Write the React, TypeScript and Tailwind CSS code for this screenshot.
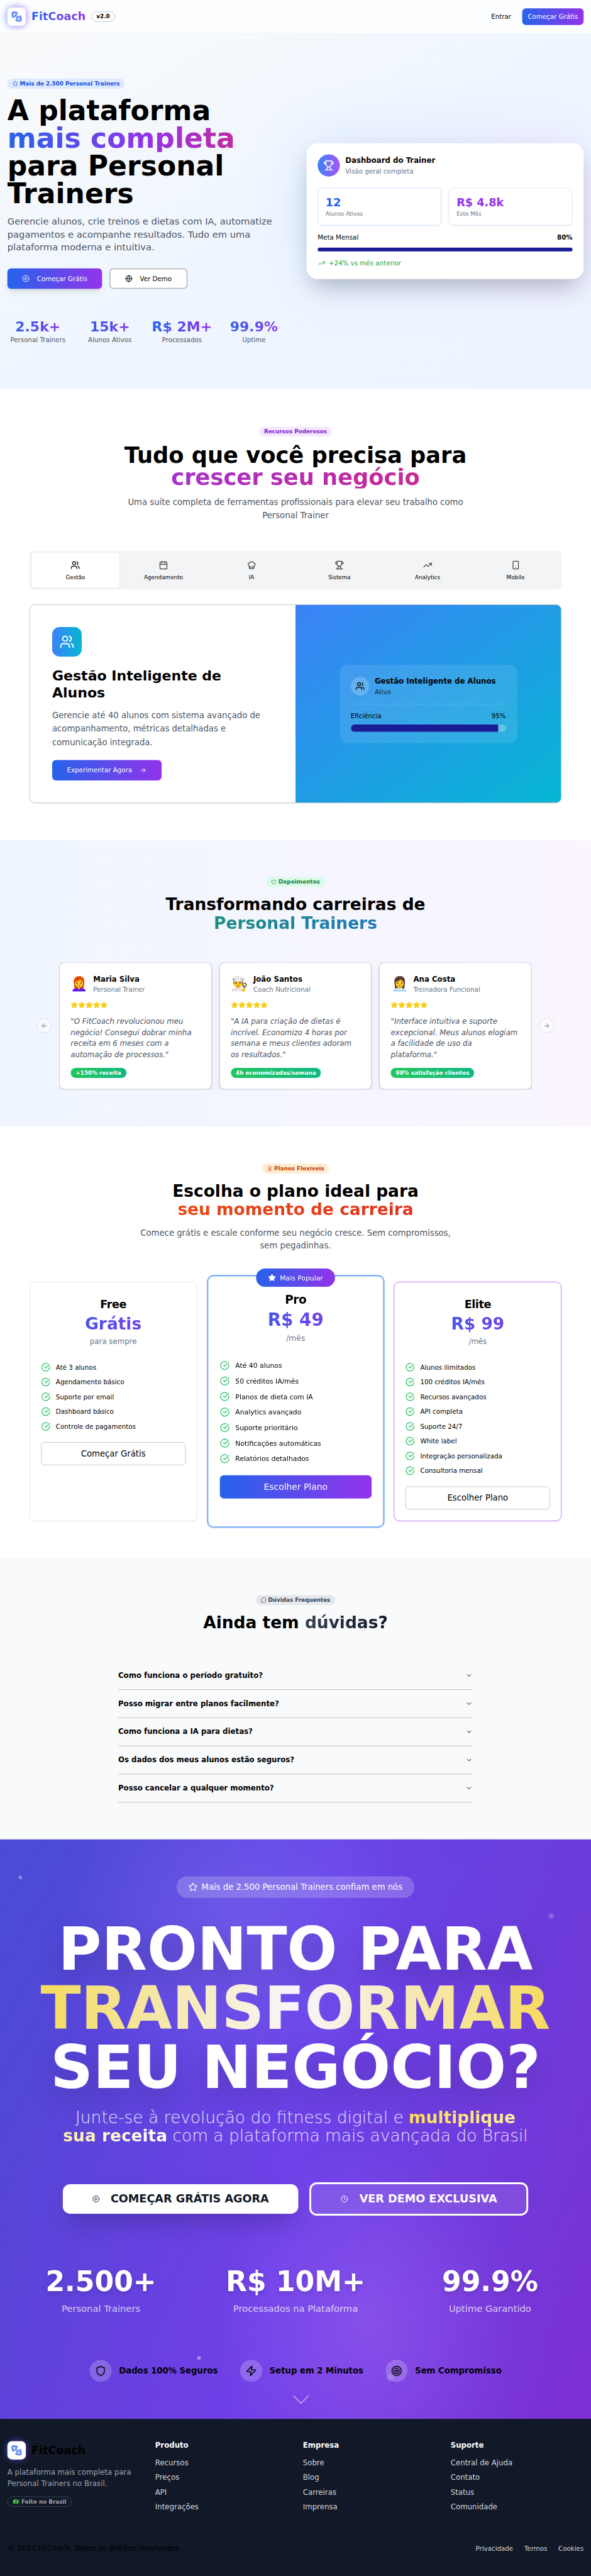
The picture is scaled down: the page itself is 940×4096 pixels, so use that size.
import React from "react";
import {
  ArrowLeft,
  ArrowRight,
  Award,
  Calendar,
  ChefHat,
  ChevronDown,
  CircleCheckBig,
  CirclePlay,
  Clock,
  Globe,
  Heart,
  MessageCircle,
  Shield,
  Smartphone,
  Star,
  Target,
  TrendingUp,
  Trophy,
  Users,
  Zap,
} from "lucide-react";

function Dumbbell({ className }: { className?: string }) {
  return (
    <svg
      className={className}
      viewBox="0 0 24 24"
      fill="none"
      stroke="currentColor"
      strokeWidth="2"
      strokeLinecap="round"
      strokeLinejoin="round"
    >
      <path d="M14.4 14.4 9.6 9.6" />
      <path d="M18.657 21.485a2 2 0 1 1-2.829-2.828l-1.767 1.768a2 2 0 1 1-2.829-2.829l6.364-6.364a2 2 0 1 1 2.829 2.829l-1.768 1.767a2 2 0 1 1 2.828 2.829z" />
      <path d="m21.5 21.5-1.4-1.4" />
      <path d="M3.9 3.9 2.5 2.5" />
      <path d="M6.404 12.768a2 2 0 1 1-2.829-2.829l1.768-1.767a2 2 0 1 1-2.828-2.829l2.828-2.828a2 2 0 1 1 2.829 2.828l1.767-1.768a2 2 0 1 1 2.829 2.829z" />
    </svg>
  );
}

function LogoMark() {
  return (
    <div className="relative size-10 shrink-0">
      <div className="absolute inset-0 rounded-xl bg-linear-to-r/srgb from-[#2563eb] to-[#9333ea] opacity-75 blur-sm" />
      <div className="relative flex size-10 items-center justify-center rounded-[10px] bg-white">
        <Dumbbell className="size-6 text-[#2563eb]" />
      </div>
    </div>
  );
}

function Badge({ className = "", children }: { className?: string; children: React.ReactNode }) {
  return (
    <span
      className={`inline-flex h-[22px] shrink-0 items-center gap-1 rounded-full border px-2.5 text-xs font-semibold whitespace-nowrap ${className}`}
    >
      {children}
    </span>
  );
}

function Header() {
  return (
    <header className="flex h-[73px] items-center justify-between border-b border-[#e5e7eb] bg-[#fdfeff] px-4">
      <div className="flex items-center gap-3">
        <LogoMark />
        <span className="bg-linear-to-r/srgb from-[#2563eb] to-[#9333ea] bg-clip-text text-2xl font-bold text-transparent">
          FitCoach
        </span>
        <Badge className="border-[#b3b3b3]">v2.0</Badge>
      </div>
      <div className="flex items-center gap-6 text-sm">
        <span>Entrar</span>
        <button className="h-9 rounded-lg bg-linear-to-r/srgb from-[#2563eb] to-[#9333ea] px-3 text-white">
          Começar Grátis
        </button>
      </div>
    </header>
  );
}

const heroStats = [
  ["2.5k+", "Personal Trainers"],
  ["15k+", "Alunos Ativos"],
  ["R$ 2M+", "Processados"],
  ["99.9%", "Uptime"],
];

function Hero() {
  return (
    <section className="grid h-[769px] grid-cols-2 gap-12 overflow-hidden bg-linear-to-br/srgb from-[#f9fafb] via-[#eff6ff] to-[#eef4ff] px-4 pt-24">
      <div>
        <div className="mb-4 flex h-6 pt-px">
          <Badge className="border-transparent bg-[#dbeafe] text-[#1d4ed8]">
            <Star className="size-3" />
            Mais de 2.500 Personal Trainers
          </Badge>
        </div>
        <h1 className="text-6xl leading-none font-bold whitespace-nowrap">
          A plataforma
          <span className="block bg-linear-to-r/srgb from-[#2563eb] via-[#9333ea] to-[#db2777] bg-clip-text text-transparent">
            mais completa
          </span>
          para Personal
          <br />
          Trainers
        </h1>
        <p className="mt-4 text-xl text-[#4b5563]">
          Gerencie alunos, crie treinos e dietas com IA, automatize pagamentos e acompanhe resultados. Tudo em uma
          plataforma moderna e intuitiva.
        </p>
        <div className="mt-8 flex gap-4 text-sm">
          <button className="flex h-11 items-center gap-4 rounded-lg bg-linear-to-r/srgb from-[#2563eb] to-[#9333ea] px-8 text-white shadow-lg">
            <CirclePlay className="size-4" />
            Começar Grátis
          </button>
          <button className="flex h-11 items-center gap-4 rounded-lg border-2 border-[#b3b3b3] bg-white px-8">
            <Globe className="size-4" />
            Ver Demo
          </button>
        </div>
        <div className="mt-16 grid grid-cols-4 gap-6 text-center">
          {heroStats.map(([value, label]) => (
            <div key={label}>
              <div className="bg-linear-to-r/srgb from-[#2563eb] to-[#9333ea] bg-clip-text text-3xl font-bold whitespace-nowrap text-transparent">
                {value}
              </div>
              <div className="text-sm text-[#4b5563]">{label}</div>
            </div>
          ))}
        </div>
      </div>

      <div className="relative mt-[141px] h-[294px]">
        <div className="absolute inset-0 rounded-3xl bg-linear-to-r/srgb from-[#60a5fa] to-[#c084fc] opacity-20 blur-3xl" />
        <div className="relative rounded-3xl bg-white p-6 shadow-2xl">
          <div className="flex items-center gap-3">
            <div className="flex size-12 items-center justify-center rounded-full bg-linear-to-r/srgb from-[#3b82f6] to-[#a855f7]">
              <Trophy className="size-6 text-white" />
            </div>
            <div>
              <div className="font-semibold">Dashboard do Trainer</div>
              <div className="text-sm text-[#6b7280]">Visão geral completa</div>
            </div>
          </div>
          <div className="mt-6 grid grid-cols-2 gap-4">
            <div className="rounded-xl border border-[#bfdbfe] p-4 shadow-xs">
              <div className="text-2xl font-bold text-[#2563eb]">12</div>
              <div className="text-xs text-[#6b7280]">Alunos Ativos</div>
            </div>
            <div className="rounded-xl border border-[#e9d5ff] p-4 shadow-xs">
              <div className="text-2xl font-bold text-[#9333ea]">R$ 4.8k</div>
              <div className="text-xs text-[#6b7280]">Este Mês</div>
            </div>
          </div>
          <div className="mt-4 flex justify-between text-sm">
            <span>Meta Mensal</span>
            <span className="font-semibold">80%</span>
          </div>
          <div className="mt-3 h-2 rounded-full bg-[#1a1c96]" />
          <div className="mt-4 flex items-center gap-2 text-sm text-[#16a34a]">
            <TrendingUp className="size-4" />
            +24% vs mês anterior
          </div>
        </div>
      </div>
    </section>
  );
}

const tabs = [
  { label: "Gestão", Icon: Users },
  { label: "Agendamento", Icon: Calendar },
  { label: "IA", Icon: ChefHat },
  { label: "Sistema", Icon: Trophy },
  { label: "Analytics", Icon: TrendingUp },
  { label: "Mobile", Icon: Smartphone },
];

function Features() {
  return (
    <section className="h-[976px] bg-white px-16 pt-[79px]">
      <div className="mb-4 flex h-6 justify-center pt-0.5">
        <Badge className="border-transparent bg-[#f3e8ff] text-[#7e22ce]">Recursos Poderosos</Badge>
      </div>
      <h2 className="text-center text-5xl leading-none font-bold">
        Tudo que você precisa para
        <span className="block bg-linear-to-r/srgb from-[#9333ea] to-[#db2777] bg-clip-text text-transparent">
          crescer seu negócio
        </span>
      </h2>
      <p className="mt-4 text-center text-lg leading-7 whitespace-nowrap text-[#4b5563]">
        Uma suíte completa de ferramentas profissionais para elevar seu trabalho como
        <br />
        Personal Trainer
      </p>

      <div className="mt-16 grid h-[83px] grid-cols-6 rounded-lg bg-[#f3f4f6] p-1">
        {tabs.map(({ label, Icon }, i) => (
          <div
            key={label}
            className={
              i === 0
                ? "flex flex-col items-center gap-2 rounded-md bg-white pt-4 text-xs shadow-xs"
                : "flex flex-col items-center gap-2 pt-4 text-xs"
            }
          >
            <Icon className={i === 0 ? "size-5" : "size-5 opacity-75"} />
            {label}
          </div>
        ))}
      </div>

      <div className="mt-8 grid h-[430px] grid-cols-2 overflow-hidden rounded-xl border border-[#b3b3b3] bg-white shadow-xs">
        <div className="p-12">
          <div className="flex size-16 items-center justify-center rounded-2xl bg-linear-to-r/srgb from-[#3b82f6] to-[#06b6d4]">
            <Users className="size-8 text-white" />
          </div>
          <h3 className="mt-6 text-3xl font-bold">Gestão Inteligente de Alunos</h3>
          <p className="mt-4 text-lg leading-relaxed text-[#4b5563]">
            Gerencie até 40 alunos com sistema avançado de acompanhamento, métricas detalhadas e comunicação integrada.
          </p>
          <button className="mt-6 flex h-11 items-center gap-4 rounded-lg bg-linear-to-r/srgb from-[#2563eb] to-[#9333ea] px-8 text-sm text-white">
            Experimentar Agora
            <ArrowRight className="size-4" />
          </button>
        </div>
        <div className="flex items-center justify-center bg-linear-to-br/srgb from-[#3b82f6] to-[#06b6d4]">
          <div className="w-96 rounded-2xl bg-white/10 p-6">
            <div className="flex items-center gap-3 border-b border-white/20 pb-4">
              <div className="flex size-10 items-center justify-center rounded-full bg-white/20">
                <Users className="size-5" />
              </div>
              <div className="whitespace-nowrap">
                <div className="font-semibold">Gestão Inteligente de Alunos</div>
                <div className="text-sm opacity-80">Ativo</div>
              </div>
            </div>
            <div className="mt-4 flex justify-between text-sm">
              <span>Eficiência</span>
              <span>95%</span>
            </div>
            <div className="mt-2 h-4 overflow-hidden rounded-full bg-white/25">
              <div className="h-full w-[95%] bg-[#1a1c96]" />
            </div>
          </div>
        </div>
      </div>
    </section>
  );
}

const testimonials = [
  {
    emoji: "👩‍🦰",
    name: "Maria Silva",
    role: "Personal Trainer",
    quote: '"O FitCoach revolucionou meu negócio! Consegui dobrar minha receita em 6 meses com a automação de processos."',
    result: "+150% receita",
  },
  {
    emoji: "👨‍🍳",
    name: "João Santos",
    role: "Coach Nutricional",
    quote: '"A IA para criação de dietas é incrível. Economizo 4 horas por semana e meus clientes adoram os resultados."',
    result: "4h economizadas/semana",
  },
  {
    emoji: "👩‍💼",
    name: "Ana Costa",
    role: "Treinadora Funcional",
    quote: '"Interface intuitiva e suporte excepcional. Meus alunos elogiam a facilidade de uso da plataforma."',
    result: "98% satisfação clientes",
  },
];

function Testimonials() {
  return (
    <section className="h-[620px] bg-linear-to-r/srgb from-[#eff6ff] to-[#faf5ff] pt-20">
      <div className="mx-auto w-5xl">
        <div className="mb-4 flex h-6 justify-center">
          <Badge className="border-transparent bg-[#dcfce7] text-[#15803d]">
            <Heart className="size-3" />
            Depoimentos
          </Badge>
        </div>
        <h2 className="text-center text-4xl font-bold">
          Transformando carreiras de
          <span className="block bg-linear-to-r/srgb from-[#16a34a] to-[#2563eb] bg-clip-text text-transparent">
            Personal Trainers
          </span>
        </h2>
      </div>
      <div className="mt-16 flex items-center justify-center gap-4">
        <button className="flex size-8 items-center justify-center rounded-full border border-[#b3b3b3] bg-white opacity-50">
          <ArrowLeft className="size-4" />
        </button>
        <div className="grid w-5xl grid-cols-3 gap-4 overflow-hidden">
          {testimonials.map((t) => (
            <div key={t.name} className="h-[276px] rounded-xl border border-[#b3b3b3] bg-white p-6 shadow-lg">
              <div className="flex items-center gap-3">
                <span className="text-3xl">{t.emoji}</span>
                <div>
                  <div className="font-semibold">{t.name}</div>
                  <div className="text-sm text-[#6b7280]">{t.role}</div>
                </div>
              </div>
              <div className="mt-4 flex">
                {[0, 1, 2, 3, 4].map((n) => (
                  <Star key={n} className="size-4 fill-[#facc15] text-[#facc15]" />
                ))}
              </div>
              <p className="mt-4 mb-4 text-[#4b5563] italic">{t.quote}</p>
              <div className="flex">
                <Badge className="border-transparent bg-linear-to-r/srgb from-[#22c55e] to-[#10b981] bg-origin-border text-white">
                  {t.result}
                </Badge>
              </div>
            </div>
          ))}
        </div>
        <button className="flex size-8 items-center justify-center rounded-full border border-[#b3b3b3] bg-white opacity-50">
          <ArrowRight className="size-4" />
        </button>
      </div>
    </section>
  );
}

const plans = [
  {
    name: "Free",
    price: "Grátis",
    period: "para sempre",
    features: ["Até 3 alunos", "Agendamento básico", "Suporte por email", "Dashboard básico", "Controle de pagamentos"],
    cta: "Começar Grátis",
    card: "border-[#e5e7eb] shadow-xs",
    button: "h-[50px] border border-[#b3b3b3] bg-white",
    popular: false,
  },
  {
    name: "Pro",
    price: "R$ 49",
    period: "/mês",
    features: [
      "Até 40 alunos",
      "50 créditos IA/mês",
      "Planos de dieta com IA",
      "Analytics avançado",
      "Suporte prioritário",
      "Notificações automáticas",
      "Relatórios detalhados",
    ],
    cta: "Escolher Plano",
    card: "scale-105 border-[#3b82f6] ring-2 ring-[#3b82f6]/50",
    button: "h-12 bg-linear-to-r/srgb from-[#2563eb] to-[#9333ea] text-white",
    popular: true,
  },
  {
    name: "Elite",
    price: "R$ 99",
    period: "/mês",
    features: [
      "Alunos ilimitados",
      "100 créditos IA/mês",
      "Recursos avançados",
      "API completa",
      "Suporte 24/7",
      "White label",
      "Integração personalizada",
      "Consultoria mensal",
    ],
    cta: "Escolher Plano",
    card: "border-[#a855f7] shadow-xs",
    button: "h-[50px] border border-[#b3b3b3] bg-white",
    popular: false,
  },
];

function Pricing() {
  return (
    <section className="h-[934px] bg-white px-16 pt-20">
      <div className="mb-4 flex h-6 justify-center">
        <Badge className="border-transparent bg-[#ffedd5] text-[#c2410c]">
          <Award className="size-3" />
          Planos Flexíveis
        </Badge>
      </div>
      <h2 className="text-center text-4xl font-bold">
        Escolha o plano ideal para
        <span className="block bg-linear-to-r/srgb from-[#ea580c] to-[#dc2626] bg-clip-text text-transparent">
          seu momento de carreira
        </span>
      </h2>
      <p className="mt-4 text-center text-lg leading-7 whitespace-nowrap text-[#4b5563]">
        Comece grátis e escale conforme seu negócio cresce. Sem compromissos,
        <br />
        sem pegadinhas.
      </p>
      <div className="mt-16 grid h-[518px] grid-cols-3 gap-8">
        {plans.map((plan) => (
          <div key={plan.name} className={`relative rounded-xl border bg-white px-6 pt-8 ${plan.card}`}>
            {plan.popular && (
              <div className="absolute -top-4 left-1/2 flex -translate-x-1/2 items-center gap-2 rounded-full border border-transparent bg-linear-to-r/srgb from-[#2563eb] to-[#9333ea] px-6 py-2 text-sm whitespace-nowrap text-white">
                <Star className="size-4 fill-current" />
                Mais Popular
              </div>
            )}
            <div className="flex flex-col gap-1.5 text-center">
              <h3 className="text-2xl font-semibold tracking-tight">{plan.name}</h3>
              <div className="bg-linear-to-r/srgb from-[#2563eb] to-[#9333ea] bg-clip-text text-4xl font-bold text-transparent">
                {plan.price}
              </div>
              <div className="text-[#6b7280]">{plan.period}</div>
            </div>
            <ul className="mt-[34px] flex flex-col gap-3 text-sm">
              {plan.features.map((f) => (
                <li key={f} className="flex items-center gap-3">
                  <CircleCheckBig className="size-5 text-[#22c55e]" />
                  {f}
                </li>
              ))}
            </ul>
            <button className={`mt-6 w-full rounded-lg text-lg ${plan.button}`}>{plan.cta}</button>
          </div>
        ))}
      </div>
    </section>
  );
}

const questions = [
  "Como funciona o período gratuito?",
  "Posso migrar entre planos facilmente?",
  "Como funciona a IA para dietas?",
  "Os dados dos meus alunos estão seguros?",
  "Posso cancelar a qualquer momento?",
];

function Faq() {
  return (
    <section className="h-[609px] bg-[#f9fafb] pt-20">
      <div className="mb-4 flex h-6 justify-center">
        <Badge className="border-transparent bg-[#e5e7eb] text-[#374151]">
          <MessageCircle className="size-3" />
          Dúvidas Frequentes
        </Badge>
      </div>
      <h2 className="text-center text-4xl font-bold">
        Ainda tem{" "}
        <span className="bg-linear-to-r/srgb from-[#374151] to-[#111827] bg-clip-text text-transparent">dúvidas?</span>
      </h2>
      <div className="mx-auto mt-16 w-3xl">
        {questions.map((q) => (
          <div key={q} className="flex h-[61px] items-center justify-between border-b border-[#b3b3b3] font-semibold">
            {q}
            <ChevronDown className="size-4" />
          </div>
        ))}
      </div>
    </section>
  );
}

const ctaStats = [
  ["2.500+", "Personal Trainers"],
  ["R$ 10M+", "Processados na Plataforma"],
  ["99.9%", "Uptime Garantido"],
];

const guarantees = [
  { label: "Dados 100% Seguros", Icon: Shield },
  { label: "Setup em 2 Minutos", Icon: Zap },
  { label: "Sem Compromisso", Icon: Target },
];

function CallToAction() {
  return (
    <section className="relative h-[1254px] overflow-hidden bg-[radial-gradient(circle_380px_at_520px_190px,rgba(150,160,255,0.22),transparent),radial-gradient(ellipse_330px_400px_at_800px_1050px,rgba(190,130,255,0.28),transparent),linear-gradient(100deg,transparent_10%,rgba(120,70,255,0.45)_50%,transparent_95%),linear-gradient(122deg,#494cd8,#7e30d4)] px-8 pt-20 text-white">
      <div className="absolute top-[78px] left-10 size-2 rounded-full bg-white/35" />
      <div className="absolute top-[160px] left-[1188px] size-3 rounded-full bg-white/20" />
      <div className="absolute top-[1118px] left-[427px] size-2 rounded-full bg-white/40" />

      <div className="flex justify-center">
        <div className="flex h-[46px] items-center gap-2 rounded-full border border-white/20 bg-white/20 px-6 text-lg whitespace-nowrap">
          <Star className="size-5" />
          Mais de 2.500 Personal Trainers confiam em nós
        </div>
      </div>
      <h2 className="mt-12 text-center text-9xl leading-none font-black whitespace-nowrap">
        <span className="block drop-shadow-2xl">PRONTO PARA</span>
        <span className="block bg-linear-to-r/srgb from-[#fde047] via-white to-[#fde047] bg-clip-text text-transparent opacity-95">
          TRANSFORMAR
        </span>
        <span className="block drop-shadow-2xl">SEU NEGÓCIO?</span>
      </h2>
      <p className="mt-6 text-center text-4xl font-light whitespace-nowrap text-white/85">
        Junte-se à revolução do fitness digital e{" "}
        <span className="bg-linear-to-r/srgb from-[#fde047] to-white bg-clip-text font-bold text-transparent">
          multiplique
          <br />
          sua receita
        </span>{" "}
        com a plataforma mais avançada do Brasil
      </p>
      <div className="mt-20 flex items-center justify-center gap-6 text-2xl font-bold whitespace-nowrap">
        <button className="flex h-16 items-center gap-6 rounded-2xl bg-white px-16 text-[#111827] shadow-2xl">
          <CirclePlay className="size-4" />
          COMEÇAR GRÁTIS AGORA
        </button>
        <button className="flex h-[72px] items-center gap-6 rounded-2xl border-4 border-white bg-white/10 px-16">
          <Clock className="size-4" />
          VER DEMO EXCLUSIVA
        </button>
      </div>
      <div className="mt-28 grid grid-cols-3 gap-12 text-center whitespace-nowrap">
        {ctaStats.map(([value, label]) => (
          <div key={label}>
            <div className="text-6xl leading-none font-black drop-shadow-lg">{value}</div>
            <div className="mt-4 text-xl text-white/75">{label}</div>
          </div>
        ))}
      </div>
      <div className="mt-24 flex justify-center gap-12 text-lg font-semibold whitespace-nowrap text-black">
        {guarantees.map(({ label, Icon }) => (
          <div key={label} className="flex items-center gap-4">
            <div className="flex size-12 items-center justify-center rounded-full bg-white/20">
              <Icon className="size-6" />
            </div>
            {label}
          </div>
        ))}
      </div>
      <div className="absolute top-[1157px] left-[837px] size-4 rounded-full bg-white/15" />
      <svg
        className="absolute top-[1202px] left-[634px] h-5 w-9 text-white/70"
        viewBox="0 0 36 20"
        fill="none"
        stroke="currentColor"
        strokeWidth="1.6"
      >
        <path d="M1.5 1.5 18 18.2 34.5 1.5" />
      </svg>
    </section>
  );
}

const footerColumns = [
  { title: "Produto", links: ["Recursos", "Preços", "API", "Integrações"] },
  { title: "Empresa", links: ["Sobre", "Blog", "Carreiras", "Imprensa"] },
  { title: "Suporte", links: ["Central de Ajuda", "Contato", "Status", "Comunidade"] },
];

function Footer() {
  return (
    <footer className="h-[340px] bg-[#111827] px-4 pt-12">
      <div className="grid h-[187px] grid-cols-4 gap-8">
        <div>
          <div className="flex items-center gap-3">
            <LogoMark />
            <span className="text-2xl font-bold text-black">FitCoach</span>
          </div>
          <p className="my-4 text-[#9ca3af]">A plataforma mais completa para Personal Trainers no Brasil.</p>
          <div className="flex">
            <Badge className="border-[#4b5563] text-[#9ca3af]">🇧🇷 Feito no Brasil</Badge>
          </div>
        </div>
        {footerColumns.map((col) => (
          <div key={col.title}>
            <h4 className="mb-[15px] leading-5 font-semibold text-white">{col.title}</h4>
            <ul className="flex flex-col gap-2 text-[#d1d5db]">
              {col.links.map((link) => (
                <li key={link}>{link}</li>
              ))}
            </ul>
          </div>
        ))}
      </div>
      <div className="flex items-center justify-between border-t border-[#1f2937] pt-8">
        <span className="text-black">© 2024 FitCoach. Todos os direitos reservados.</span>
        <div className="flex gap-6 text-sm text-[#d1d5db]">
          <span>Privacidade</span>
          <span>Termos</span>
          <span>Cookies</span>
        </div>
      </div>
    </footer>
  );
}

export default function App() {
  return (
    <div className="h-[4096px] w-[940px] overflow-hidden bg-[#111827]">
      <div className="w-[1280px] origin-top-left scale-x-[0.734375] scale-y-[0.734709] bg-white font-['DejaVu_Sans',sans-serif] text-black">
        <Header />
        <Hero />
        <Features />
        <Testimonials />
        <Pricing />
        <Faq />
        <div className="bg-[#111827]">
          <CallToAction />
          <Footer />
        </div>
      </div>
    </div>
  );
}
